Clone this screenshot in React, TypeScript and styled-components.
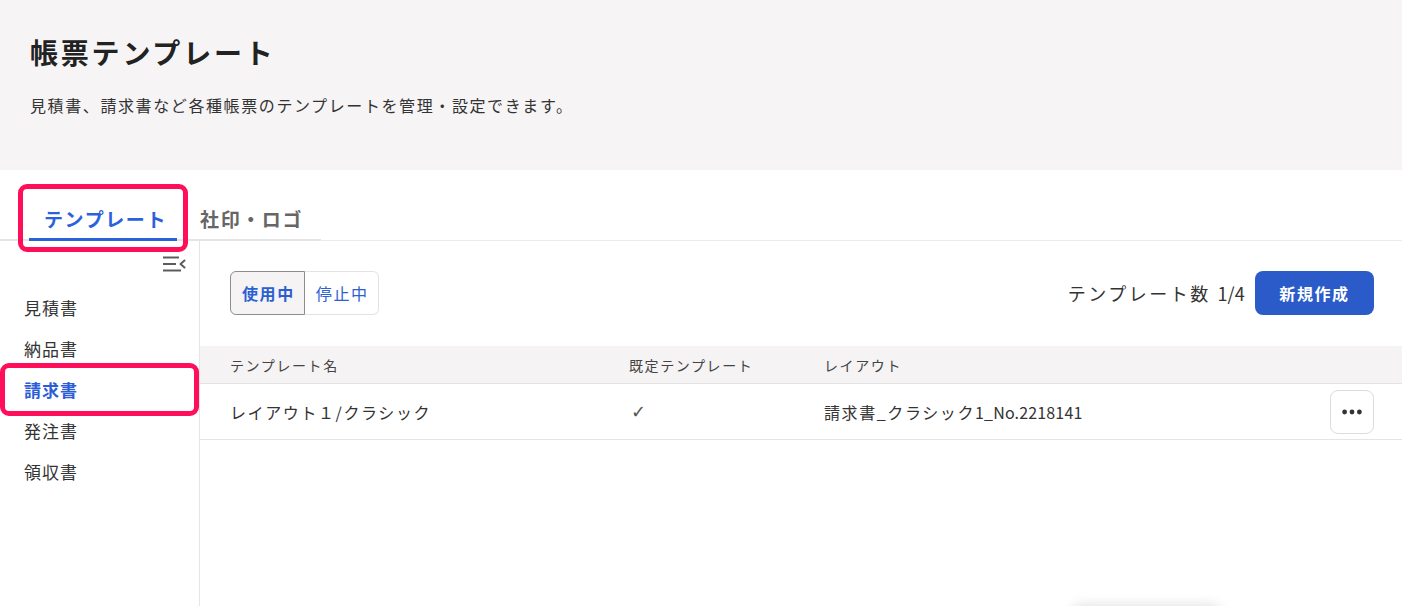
import React from "react";
import styled, { createGlobalStyle } from "styled-components";

const GlobalStyle = createGlobalStyle`
  html, body { margin: 0; padding: 0; background: #ffffff; }
  body {
    font-family: "Noto Sans CJK JP", "Noto Sans", sans-serif;
    color: #333333;
    letter-spacing: 0.1em;
  }
  * { box-sizing: border-box; }
`;

const Page = styled.div`
  height: 606px;
  display: flex;
  flex-direction: column;
  overflow: hidden;
`;

const Header = styled.header`
  height: 170px;
  flex: none;
  background: #f6f4f5;
  padding: 31px 30px 0;
`;

const Title = styled.h1`
  margin: 0;
  font-size: 28px;
  font-weight: 700;
  line-height: 42px;
  letter-spacing: 0.1em;
  color: #222222;
`;

const Subtitle = styled.p`
  margin: 20px 0 0;
  font-size: 16px;
  line-height: 24px;
  color: #333333;
`;

const TabBar = styled.div`
  height: 71px;
  flex: none;
  display: flex;
  align-items: flex-end;
  border-bottom: 1px solid #ebebeb;
`;

const TabList = styled.div`
  display: flex;
  gap: 8px;
  padding: 0 8px 0 29px;
  margin-bottom: -1px;
  box-shadow: inset 0 -2px 0 #e4e4e4;
`;

const Tab = styled.div<{ $active?: boolean }>`
  position: relative;
  height: 41px;
  padding: 0 10px 0 15px;
  font-size: 19px;
  font-weight: 700;
  line-height: 38px;
  color: ${(p) => (p.$active ? "#2b62dc" : "#666666")};
  border-bottom: 3px solid ${(p) => (p.$active ? "#2b62dc" : "transparent")};
`;

const Highlight = styled.span<{ $t: number; $r: number; $b: number; $l: number }>`
  position: absolute;
  top: ${(p) => p.$t}px;
  right: ${(p) => p.$r}px;
  bottom: ${(p) => p.$b}px;
  left: ${(p) => p.$l}px;
  border: 5px solid #ff0f5b;
  border-radius: 9px;
  pointer-events: none;
`;

const Body = styled.div`
  flex: 1;
  display: flex;
  min-height: 0;
`;

const Sidebar = styled.nav`
  width: 200px;
  flex: none;
  border-right: 1px solid #e6e6e6;
  display: flex;
  flex-direction: column;
`;

const CollapseRow = styled.div`
  display: flex;
  justify-content: flex-end;
  padding: 15px 13px 0 0;
  height: 46px;
  color: #5c5c5c;
`;

const NavItem = styled.div<{ $active?: boolean }>`
  position: relative;
  height: 41px;
  padding-left: 24px;
  font-size: 17px;
  letter-spacing: 0.06em;
  line-height: 41px;
  font-weight: ${(p) => (p.$active ? 700 : 400)};
  color: ${(p) => (p.$active ? "#2b5dd6" : "#333333")};
`;

const Main = styled.main`
  flex: 1;
  display: flex;
  flex-direction: column;
`;

const Toolbar = styled.div`
  display: flex;
  align-items: center;
  justify-content: space-between;
  padding: 30px 28px 0 30px;
`;

const Segmented = styled.div`
  display: flex;
`;

const Segment = styled.button<{ $active?: boolean; $first?: boolean }>`
  height: 44px;
  padding: 0 9px 0 11px;
  font-family: inherit;
  letter-spacing: 0.1em;
  font-size: 16px;
  line-height: 42px;
  font-weight: ${(p) => (p.$active ? 700 : 400)};
  color: #2b5fd2;
  background: ${(p) => (p.$active ? "#f5f3f4" : "#ffffff")};
  border: 1px solid ${(p) => (p.$active ? "#8d8d8d" : "#e3e3e3")};
  border-left-width: ${(p) => (p.$first ? "1px" : "0")};
  border-radius: ${(p) => (p.$first ? "6px 0 0 6px" : "0 6px 6px 0")};
`;

const ToolbarRight = styled.div`
  display: flex;
  align-items: center;
  gap: 10px;
`;

const Count = styled.span`
  font-size: 18px;
  line-height: 24px;
  letter-spacing: 0.14em;
  color: #333333;
`;

const Latin = styled.span`
  letter-spacing: 0.01em;
`;

const PrimaryButton = styled.button`
  width: 119px;
  height: 44px;
  border: none;
  border-radius: 8px;
  background: #2a5bc8;
  color: #ffffff;
  font-family: inherit;
  font-size: 16px;
  font-weight: 700;
  letter-spacing: 0.1em;
`;

const TableHead = styled.div`
  margin-top: 31px;
  height: 38px;
  display: grid;
  grid-template-columns: 399px 195px 1fr 44px;
  align-items: center;
  padding: 0 28px 0 30px;
  background: #f5f3f4;
  border-bottom: 1px solid #e4e4e4;
  font-size: 14px;
  color: #444444;
`;

const TableRow = styled.div`
  height: 56px;
  display: grid;
  grid-template-columns: 399px 195px 1fr 44px;
  align-items: center;
  padding: 0 28px 0 30px;
  border-bottom: 1px solid #e4e4e4;
  font-size: 16px;
  color: #333333;
`;

const Check = styled.span`
  font-family: "DejaVu Sans", sans-serif;
  font-size: 18px;
  font-weight: 300;
  line-height: 24px;
  padding-left: 2px;
  color: #555555;
`;

const MoreButton = styled.button`
  width: 44px;
  height: 44px;
  border: 1px solid #dcdcdc;
  border-radius: 8px;
  background: #ffffff;
  display: flex;
  align-items: center;
  justify-content: center;
  padding: 0;
  color: #333333;
`;

const FloatingShadow = styled.div`
  position: fixed;
  left: 1072px;
  bottom: -40px;
  width: 148px;
  height: 40px;
  border-radius: 8px;
  background: #ffffff;
  box-shadow: 0 0 14px rgba(0, 0, 0, 0.14);
`;

const CollapseIcon = () => (
  <svg width="24" height="16" viewBox="0 0 24 16" fill="none" stroke="currentColor" strokeWidth="2">
    <line x1="1" y1="1.5" x2="17" y2="1.5" />
    <line x1="1" y1="8" x2="14" y2="8" />
    <line x1="1" y1="14.5" x2="19" y2="14.5" />
    <polyline points="22.5,4.5 18.5,8 22.5,11.5" strokeLinecap="round" strokeLinejoin="round" />
  </svg>
);

const DotsIcon = () => (
  <svg width="20" height="6" viewBox="0 0 20 6" fill="currentColor">
    <circle cx="2.6" cy="3" r="2.4" />
    <circle cx="10" cy="3" r="2.4" />
    <circle cx="17.4" cy="3" r="2.4" />
  </svg>
);

const navItems = ["見積書", "納品書", "請求書", "発注書", "領収書"];

export default function App() {
  return (
    <>
      <GlobalStyle />
      <Page>
        <Header>
          <Title>帳票テンプレート</Title>
          <Subtitle>見積書、請求書など各種帳票のテンプレートを管理・設定できます。</Subtitle>
        </Header>
        <TabBar>
          <TabList>
            <Tab $active>
              テンプレート
              <Highlight $t={-16} $r={-11} $b={-14} $l={-11} />
            </Tab>
            <Tab>社印・ロゴ</Tab>
          </TabList>
        </TabBar>
        <Body>
          <Sidebar>
            <CollapseRow>
              <CollapseIcon />
            </CollapseRow>
            {navItems.map((n) => (
              <NavItem key={n} $active={n === "請求書"}>
                {n}
                {n === "請求書" && <Highlight $t={-6} $r={0} $b={-6} $l={0} />}
              </NavItem>
            ))}
          </Sidebar>
          <Main>
            <Toolbar>
              <Segmented>
                <Segment $active $first>使用中</Segment>
                <Segment>停止中</Segment>
              </Segmented>
              <ToolbarRight>
                <Count>
                  テンプレート数 <Latin>1/4</Latin>
                </Count>
                <PrimaryButton>新規作成</PrimaryButton>
              </ToolbarRight>
            </Toolbar>
            <TableHead>
              <span>テンプレート名</span>
              <span>既定テンプレート</span>
              <span>レイアウト</span>
              <span />
            </TableHead>
            <TableRow>
              <span>レイアウト１/クラシック</span>
              <Check>✓</Check>
              <span>
                請求書_クラシック<Latin>1_No.2218141</Latin>
              </span>
              <MoreButton aria-label="その他">
                <DotsIcon />
              </MoreButton>
            </TableRow>
          </Main>
        </Body>
        <FloatingShadow />
      </Page>
    </>
  );
}
